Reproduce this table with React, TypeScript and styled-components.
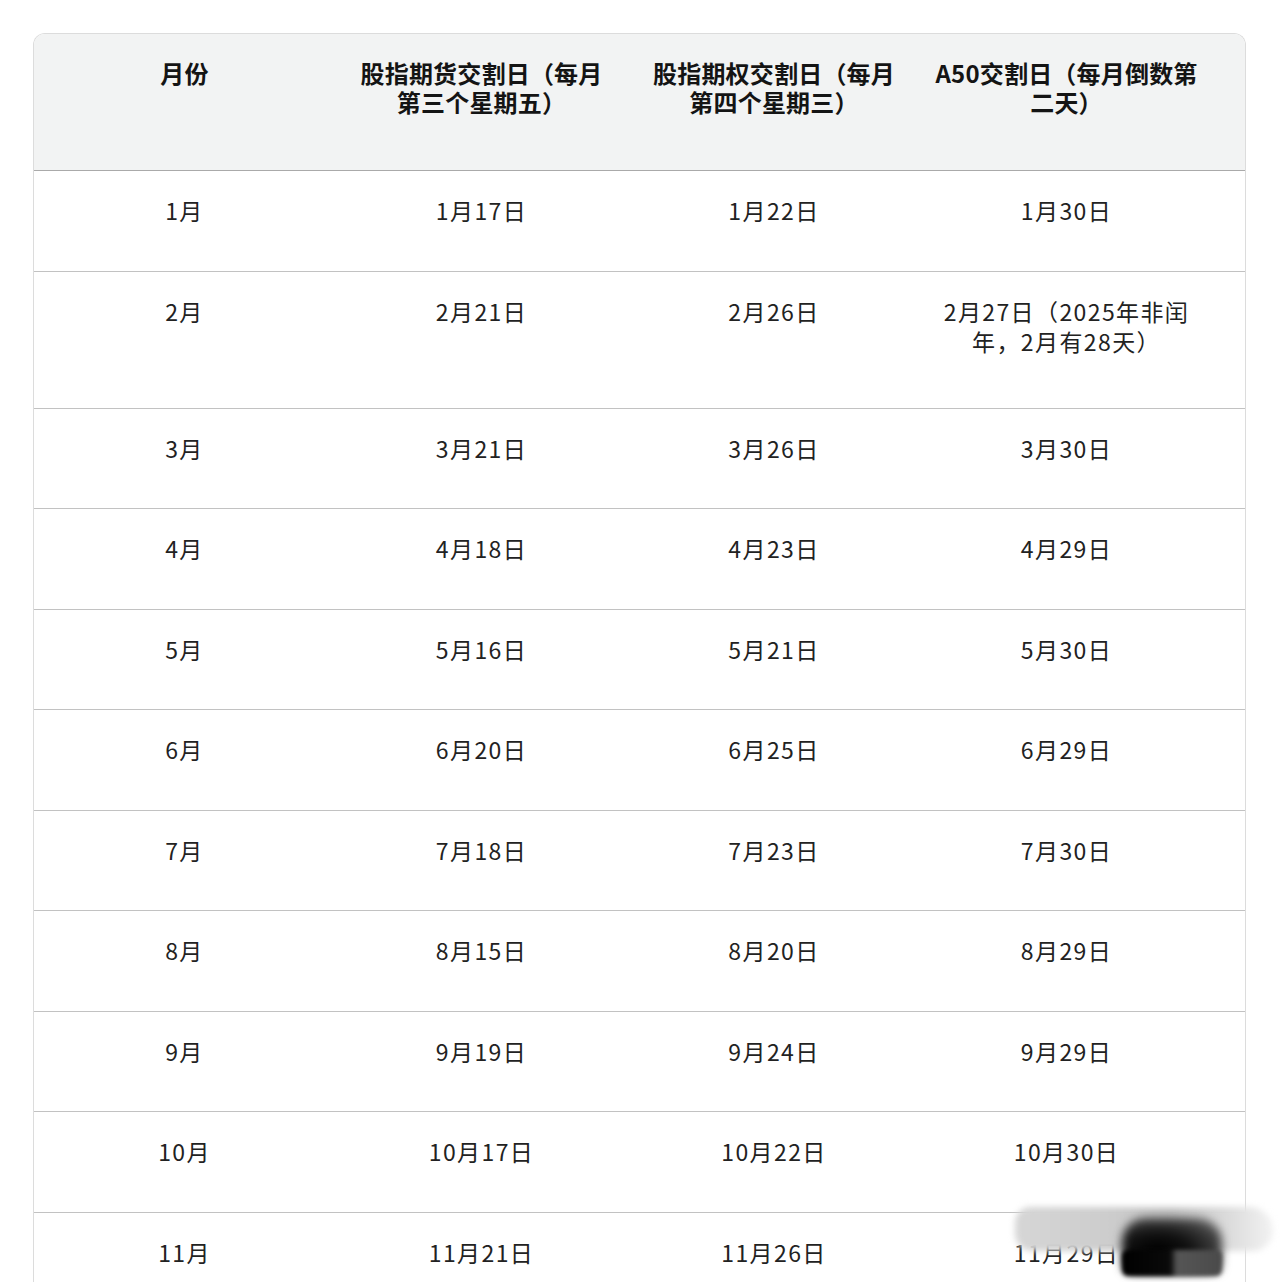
import React, { FC } from 'react';
import styled, { createGlobalStyle } from 'styled-components';

const GlobalStyle = createGlobalStyle`
  html, body {
    margin: 0;
    padding: 0;
    background: #ffffff;
  }
  body {
    font-family: "Noto Sans CJK SC", "Noto Sans", sans-serif;
    color: #1e1e1e;
  }
`;

const Page = styled.div`
  position: relative;
  height: 1282px;
  overflow: hidden;
  padding: 33px 34px 0 33px;
  box-sizing: border-box;
`;

const Table = styled.div`
  border: 1px solid #dcdcdc;
  border-bottom: none;
  border-radius: 12px 12px 0 0;
  overflow: hidden;
`;

const Row = styled.div<{ head?: boolean; tall?: boolean }>`
  display: grid;
  grid-template-columns: 301px 293px 292px 1fr;
  background: ${({ head }) => (head ? '#f2f3f3' : '#ffffff')};
  border-bottom: 1px solid ${({ head }) => (head ? '#aaaaaa' : '#c2c2c2')};
  height: ${({ head, tall }) => (head || tall ? '137px' : '100.5px')};
  box-sizing: border-box;
`;

const Cell = styled.div<{ head?: boolean; last?: boolean }>`
  padding: 24px ${({ last }) => (last ? '46px' : '20px')} 0
    ${({ last }) => (last ? '14px' : '20px')};
  text-align: center;
  font-size: ${({ head }) => (head ? '24px' : '23px')};
  line-height: ${({ head }) => (head ? '29px' : '30px')};
  letter-spacing: ${({ head }) => (head ? '0.2px' : '1.4px')};
  font-weight: ${({ head }) => (head ? 700 : 400)};
  color: ${({ head }) => (head ? '#141414' : '#222222')};
`;

// blurred mark over the bottom-right corner of the screenshot
const Smudge = styled.div`
  position: absolute;
  left: 1012px;
  top: 1204px;
  width: 268px;
  height: 78px;
  pointer-events: none;
`;

const SmudgeBand = styled.div`
  position: absolute;
  left: 3px;
  top: 3px;
  width: 258px;
  height: 44px;
  border-radius: 20px 30px 26px 22px;
  background: linear-gradient(90deg, #d6d6d6 0%, #cdcdcd 35%, #c4c4c4 60%, #d8d8d8 80%, #f2f2f2 100%);
  filter: blur(3px);
`;

const SmudgeCore = styled.div`
  position: absolute;
  left: 110px;
  top: 14px;
  width: 100px;
  height: 56px;
  border-radius: 24px 24px 10px 10px;
  background: radial-gradient(ellipse at 35% 55%, #000000 0%, #111111 35%, #444444 70%, rgba(110, 110, 110, 0.5) 100%);
  filter: blur(5px);
`;

const SmudgeFoot = styled.div`
  position: absolute;
  left: 110px;
  top: 46px;
  width: 100px;
  height: 26px;
  border-radius: 6px;
  background: linear-gradient(90deg, #000000 0%, #0a0a0a 48%, #555555 55%, #4a4a4a 100%);
  filter: blur(2px);
`;

const header = [
  '月份',
  '股指期货交割日（每月第三个星期五）',
  '股指期权交割日（每月第四个星期三）',
  'A50交割日（每月倒数第二天）',
];

const rows: string[][] = [
  ['1月', '1月17日', '1月22日', '1月30日'],
  ['2月', '2月21日', '2月26日', '2月27日（2025年非闰年，2月有28天）'],
  ['3月', '3月21日', '3月26日', '3月30日'],
  ['4月', '4月18日', '4月23日', '4月29日'],
  ['5月', '5月16日', '5月21日', '5月30日'],
  ['6月', '6月20日', '6月25日', '6月29日'],
  ['7月', '7月18日', '7月23日', '7月30日'],
  ['8月', '8月15日', '8月20日', '8月29日'],
  ['9月', '9月19日', '9月24日', '9月29日'],
  ['10月', '10月17日', '10月22日', '10月30日'],
  ['11月', '11月21日', '11月26日', '11月29日'],
];

const App: FC = () => {
  return (
    <>
      <GlobalStyle />
      <Page>
        <Table>
          <Row head>
            {header.map((h, i) => (
              <Cell head last={i === 3} key={h}>
                {h}
              </Cell>
            ))}
          </Row>
          {rows.map((r) => (
            <Row key={r[0]} tall={r[3].length > 8}>
              {r.map((c, i) => (
                <Cell last={i === 3} key={i}>
                  {c}
                </Cell>
              ))}
            </Row>
          ))}
        </Table>
        <Smudge>
          <SmudgeBand />
          <SmudgeCore />
          <SmudgeFoot />
        </Smudge>
      </Page>
    </>
  );
};

export default App;
